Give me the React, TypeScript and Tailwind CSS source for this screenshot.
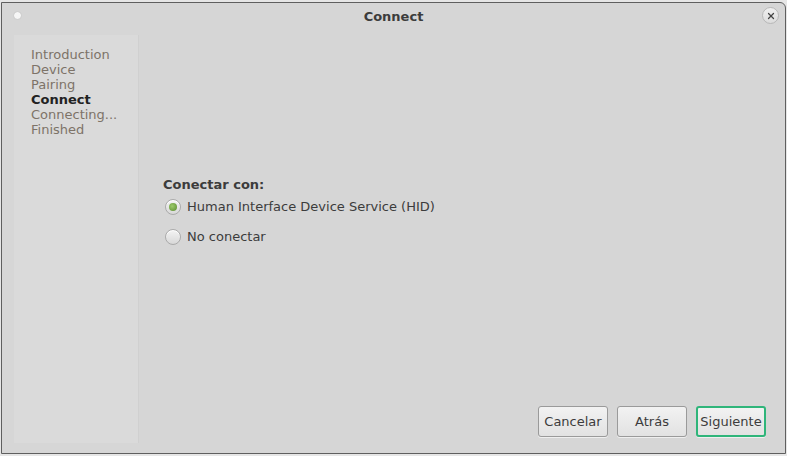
import { X } from "lucide-react";

const steps = [
  { label: "Introduction", active: false },
  { label: "Device", active: false },
  { label: "Pairing", active: false },
  { label: "Connect", active: true },
  { label: "Connecting...", active: false },
  { label: "Finished", active: false },
];

function Radio({ checked, label }: { checked: boolean; label: string }) {
  return (
    <label className="flex items-center gap-[6px] text-[13px] text-[#3c3c3c]">
      <span className="flex h-[16px] w-[16px] items-center justify-center rounded-full border border-[#aaaaaa] bg-gradient-to-b from-[#f4f4f4] to-[#d8d8d8] shadow-[inset_0_1px_0_#ffffff]">
        {checked && (
          <span className="h-[8px] w-[8px] rounded-full bg-[radial-gradient(circle_at_40%_40%,#9ccb6a,#5a8a30)]" />
        )}
      </span>
      {label}
    </label>
  );
}

function Button({ children, focused }: { children: string; focused?: boolean }) {
  return (
    <button
      className={
        "h-[31px] w-[70px] rounded-[3px] border bg-gradient-to-b from-[#f2f2f2] to-[#e2e2e2] text-[13px] text-[#3c3c3c] shadow-[0_1px_0_rgba(255,255,255,0.6)] " +
        (focused ? "border-2 border-[#2fb57a]" : "border-[#9a9a9a]")
      }
    >
      {children}
    </button>
  );
}

export default function App() {
  return (
    <div className="h-[456px] w-[787px] bg-[#e6e6e6] pt-[2px] pl-[1px] font-['DejaVu_Sans',sans-serif]">
      <div className="flex h-[452px] w-[785px] flex-col rounded-tr-[6px] border border-[#5f5f5f] bg-[#d6d6d6]">
        <div className="relative flex h-[28px] items-center justify-center">
          <span className="absolute left-[12px] top-[9px] h-[7px] w-[7px] rounded-full bg-[#f6f6f6] shadow-[0_0_1px_#9a9a9a]" />
          <span className="text-[13px] font-bold text-[#3c3c3c]">Connect</span>
          <span className="absolute right-[6px] top-[4px] flex h-[17px] w-[17px] items-center justify-center rounded-full border border-[#b8b8b8] bg-gradient-to-b from-[#f0f0f0] to-[#dcdcdc]">
            <X size={10} strokeWidth={3} className="text-[#444444]" />
          </span>
        </div>
        <div className="flex flex-1 pb-[16px] pl-[12px] pr-[19px] pt-[4px]">
          <div className="-mb-[6px] w-[125px] border-r border-[#d0d0d0] bg-[#dadada] pl-[17px] pt-[12px]">
            {steps.map((s) => (
              <div
                key={s.label}
                className={
                  "text-[13px] leading-[15px] " +
                  (s.active ? "font-bold text-[#222222]" : "text-[#7d7368]")
                }
              >
                {s.label}
              </div>
            ))}
          </div>
          <div className="flex flex-1 flex-col">
            <div className="flex flex-1 flex-col justify-center pl-[24px] pb-[20px]">
              <div className="text-[13px] font-bold text-[#3c3c3c]">Conectar con:</div>
              <div className="mt-[3px] flex flex-col gap-[10px] pl-[2px]">
                <Radio checked label="Human Interface Device Service (HID)" />
                <Radio checked={false} label="No conectar" />
              </div>
            </div>
            <div className="flex justify-end gap-[9px]">
              <Button>Cancelar</Button>
              <Button>Atrás</Button>
              <Button focused>Siguiente</Button>
            </div>
          </div>
        </div>
      </div>
    </div>
  );
}
